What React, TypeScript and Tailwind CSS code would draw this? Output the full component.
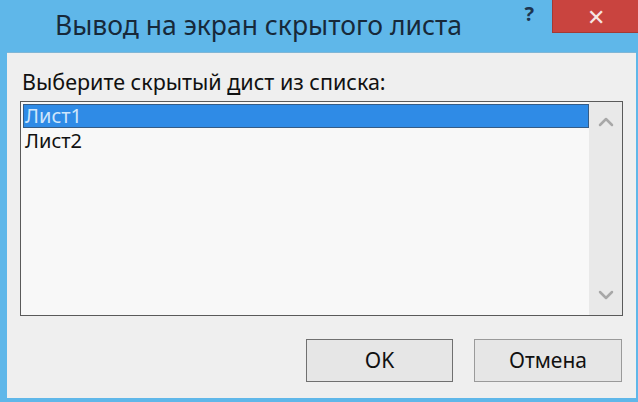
import { ChevronUp, ChevronDown } from 'lucide-react';

export default function App() {
    return (
        <div
            className="w-[638px] h-[402px] bg-[#5fb7e9] flex flex-col overflow-hidden"
            style={{ fontFamily: '"Noto Sans", "Open Sans", sans-serif' }}
        >
            {/* Title bar */}
            <div className="h-[52px] flex items-start shrink-0">
                <div className="pl-[55px] pt-[7px] text-[26.5px] leading-[36px] text-[#17293a]">
                    Вывод на экран скрытого листа
                </div>
                <div className="ml-auto flex items-start">
                    <span className="mt-[2px] mr-[18px] text-[20px] font-bold text-[#1d3550] leading-[24px]">?</span>
                    <div className="w-[86px] h-[33px] bg-[#c9443f] flex items-center justify-center border-b border-l border-[#a33a35]">
                        <span className="text-[#f6e6e4] text-[22px] leading-none font-light">✕</span>
                    </div>
                </div>
            </div>

            {/* Dialog body */}
            <div className="ml-[7px] mr-[2px] h-[346px] bg-[#efefef] border-t border-[#7fb6d6] px-[13px] flex flex-col">
                <div className="pt-[15px] pl-[2px] text-[21.5px] leading-[28px] text-[#111]">
                    Выберите скрытый <span className="underline underline-offset-[3px]">д</span>ист из списка:
                </div>

                {/* Listbox */}
                <div className="mt-[5px] h-[215px] border-[1.5px] border-[#5a5a5a] bg-[#f8f8f8] flex">
                    <div className="flex-1 pt-[2px] pl-[2px]">
                        <div className="h-[24px] bg-[#2f8be6] border border-[#355c86] pl-[1px] text-[20px] leading-[22px] text-[#cfe6fb]">
                            Лист1
                        </div>
                        <div className="h-[26px] pl-[2px] text-[20px] leading-[26px] text-[#111]">
                            Лист2
                        </div>
                    </div>
                    <div className="w-[33px] bg-[#e9e9e9] flex flex-col items-center justify-between py-[8px]">
                        <ChevronUp className="w-[24px] h-[24px] text-[#a8a8a8]" strokeWidth={2.5} />
                        <ChevronDown className="w-[24px] h-[24px] text-[#a8a8a8]" strokeWidth={2.5} />
                    </div>
                </div>

                {/* Buttons */}
                <div className="mt-[23px] flex justify-end gap-[21px] pr-[1px]">
                    <button className="w-[147px] h-[43px] bg-[#e6e6e6] border border-[#707070] text-[21px] text-[#111]">
                        OK
                    </button>
                    <button className="w-[148px] h-[43px] bg-[#e6e6e6] border border-[#9a9a9a] text-[21px] text-[#111]">
                        Отмена
                    </button>
                </div>
            </div>
        </div>
    );
}
